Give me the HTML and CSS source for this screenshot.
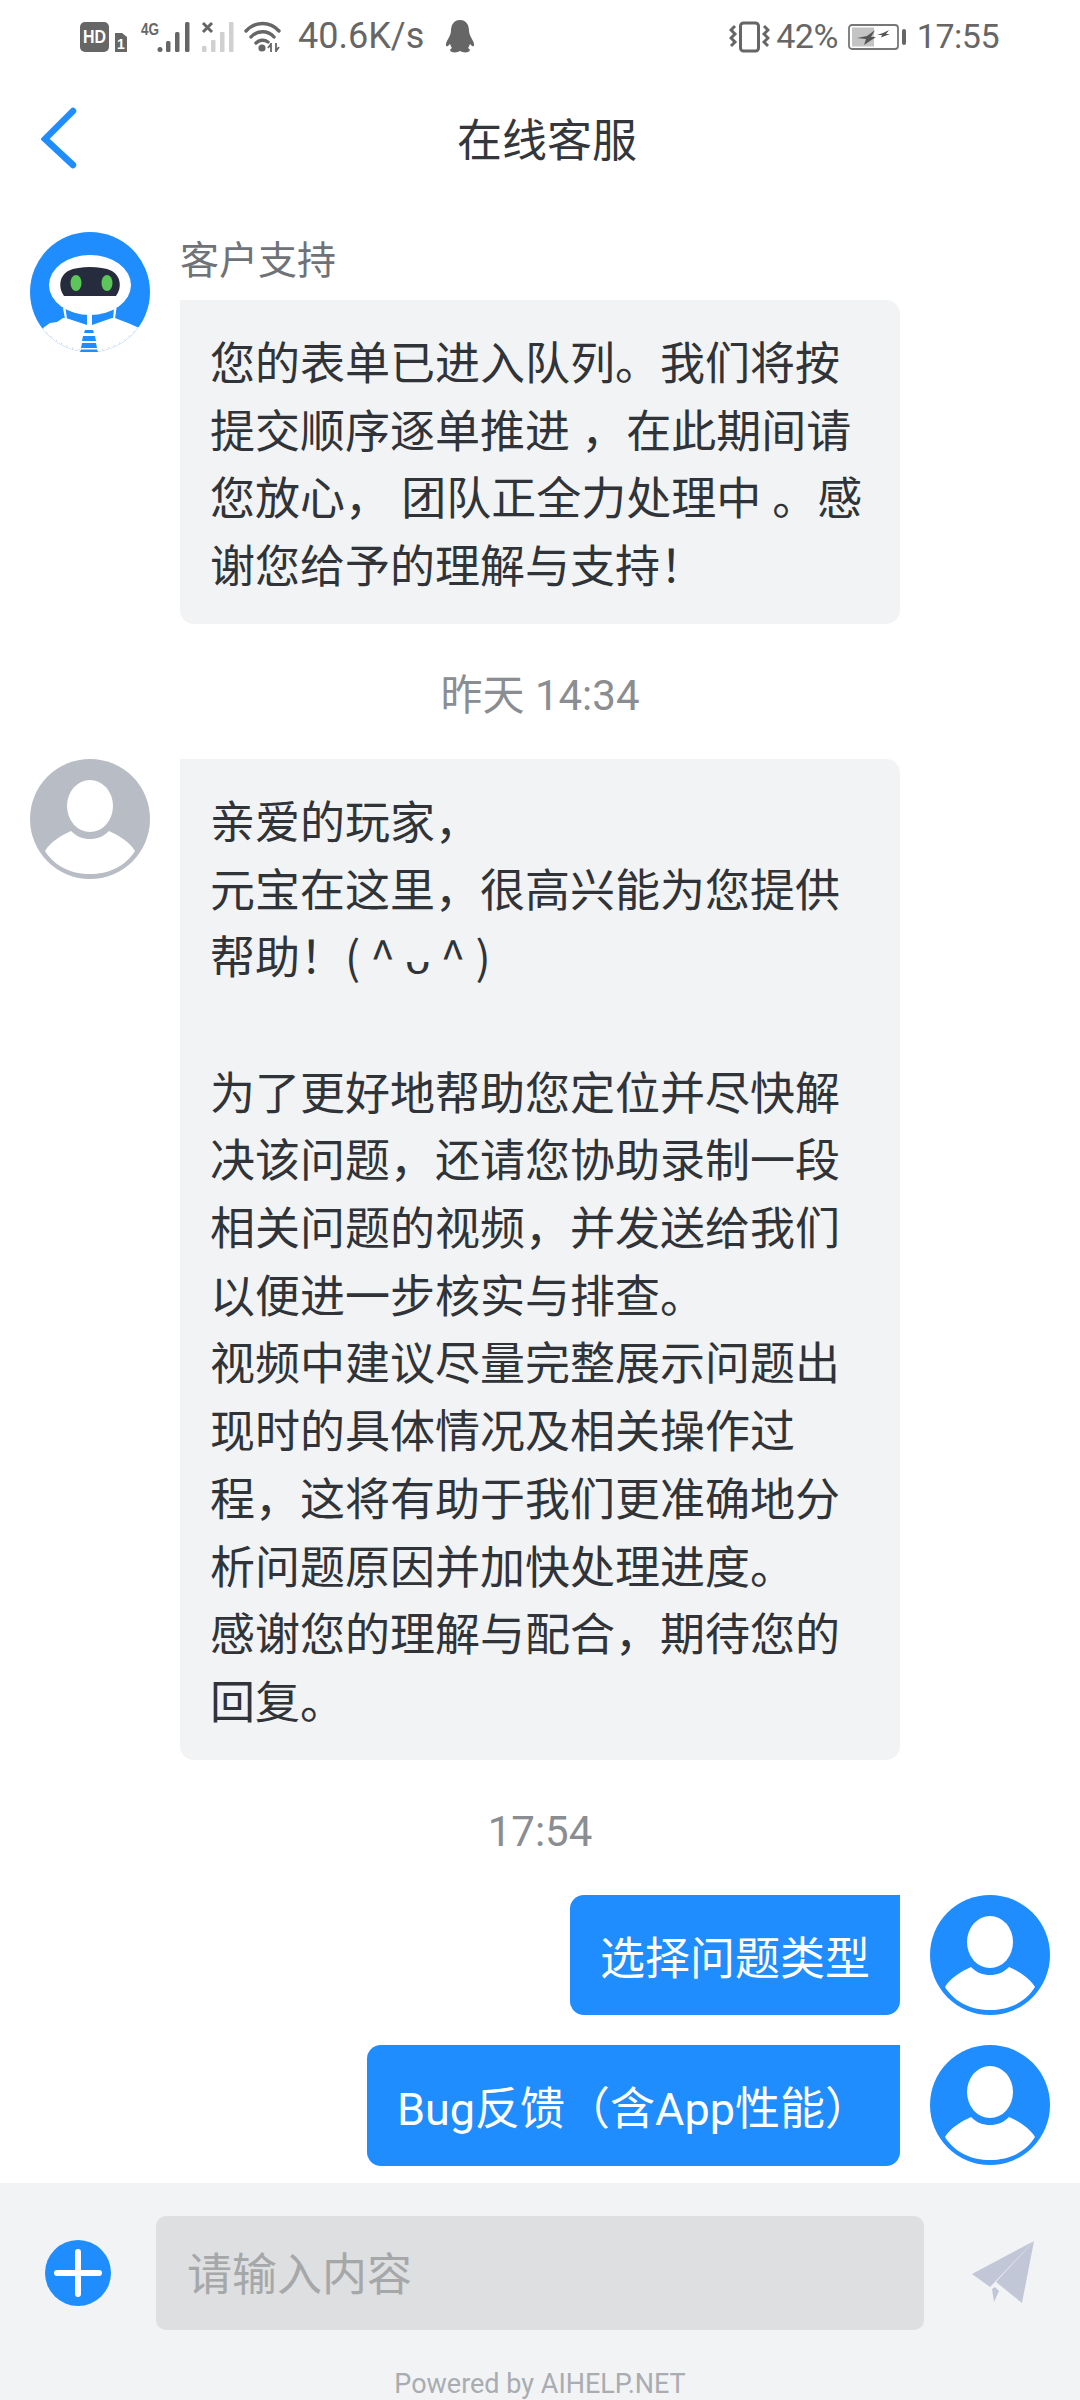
FILE: index.html
```html
<!DOCTYPE html>
<html lang="en">
<head>
  <meta charset="UTF-8">
  <title>在线客服</title>
  <link rel="stylesheet" href="styles.css">
</head>
<body>

  <div class="status-bar">
    <div class="status-group">
      <svg class="icon-hd" width="47" height="30" viewBox="0 0 47 30">
        <rect x="0" y="0" width="29" height="30" rx="5" fill="#666"/>
        <text x="14.5" y="21" class="hd-text" textLength="23" lengthAdjust="spacingAndGlyphs">HD</text>
        <path d="M35 11h7l5 4v15h-12z" fill="#666"/>
        <text x="41" y="27" class="sim-text">1</text>
      </svg>
      <svg class="icon-signal" width="50" height="32" viewBox="0 0 50 32">
        <text x="1" y="14" class="net-text" textLength="18" lengthAdjust="spacingAndGlyphs">4G</text>
        <circle cx="20" cy="28.5" r="2.5" fill="#666"/>
        <rect x="26" y="20" width="4.5" height="11" rx="1.5" fill="#666"/>
        <rect x="35" y="11" width="4.5" height="20" rx="1.5" fill="#666"/>
        <rect x="45" y="1" width="4.5" height="30" rx="1.5" fill="#666"/>
      </svg>
      <svg class="icon-signal-off" width="33" height="32" viewBox="0 0 33 32">
        <path d="M2 2l9 9M11 2l-9 9" stroke="#666" stroke-width="3" fill="none"/>
        <rect x="1" y="25" width="4.5" height="6" rx="1" fill="#d0d0d0"/>
        <rect x="10" y="19" width="4.5" height="12" rx="1" fill="#d0d0d0"/>
        <rect x="19" y="11" width="4.5" height="20" rx="1" fill="#d0d0d0"/>
        <rect x="28" y="1" width="4.5" height="30" rx="1" fill="#d0d0d0"/>
      </svg>
      <svg class="icon-wifi" width="37" height="32" viewBox="0 0 37 32">
        <path d="M2 10C11 0 26 0 35 10M7 16C13 9 24 9 30 16M12 22C15 19 20 18 24 21" stroke="#666" stroke-width="3.4" fill="none" stroke-linecap="round"/>
        <circle cx="18" cy="27" r="3.6" fill="#666"/>
        <path d="M27 22v9M32 22v9M24 27l3-4M35 26l-3 4" stroke="#666" stroke-width="1.8" fill="none"/>
      </svg>
      <span class="status-text speed">40.6K/s</span>
      <svg class="icon-qq" width="30" height="33" viewBox="0 0 30 33">
        <path d="M15 0C8 0 6 6 6 11C6 14 4 17 2 21C0 25 1 27 3 26L5 24C6 26 6 27 7 28C5 29 4 31 7 32C10 33 13 32 15 31C17 32 20 33 23 32C26 31 25 29 23 28C24 27 24 26 25 24L27 26C29 27 30 25 28 21C26 17 24 14 24 11C24 6 22 0 15 0Z" fill="#666"/>
      </svg>
    </div>
    <div class="status-group">
      <svg class="icon-vibrate" width="41" height="32" viewBox="0 0 41 32">
        <rect x="11.5" y="2" width="18" height="28" rx="3" fill="none" stroke="#666" stroke-width="3"/>
        <path d="M6 5L2 9L6 13L2 17L6 21L2 25" fill="none" stroke="#666" stroke-width="3"/>
        <path d="M35 5L39 9L35 13L39 17L35 21L39 25" fill="none" stroke="#666" stroke-width="3"/>
      </svg>
      <span class="status-text small">42%</span>
      <svg class="icon-battery" width="58" height="26" viewBox="0 0 58 26">
        <rect x="1" y="1" width="49" height="24" rx="3" fill="none" stroke="#777" stroke-width="1.8"/>
        <rect x="4" y="3.5" width="22" height="19" fill="#c4c4c4"/>
        <path d="M9 14L19 12L27 6L23 13L28 13L16 21L18 15Z" fill="#555"/>
        <path d="M29 11L35 9L41 6L38 10L42 10L33 13.5L34 11Z" fill="#555"/>
        <rect x="54" y="5" width="4" height="16" rx="2" fill="#666"/>
      </svg>
      <span class="status-text small">17:55</span>
    </div>
  </div>

  <div class="nav">
    <svg class="back" width="36" height="62" viewBox="0 0 36 62">
      <path d="M32 4L4 32L32 58" fill="none" stroke="#1f8dfd" stroke-width="6.5" stroke-linecap="round" stroke-linejoin="miter"/>
    </svg>
    <div class="nav-title">在线客服</div>
  </div>

  <div class="chat">

    <div class="row">
      <svg class="avatar" viewBox="0 0 120 120">
        <defs>
          <clipPath id="roundClip"><circle cx="60" cy="60" r="60"/></clipPath>
        </defs>
        <g clip-path="url(#roundClip)">
          <rect width="120" height="120" fill="#1f8dfd"/>
          <path d="M0 120V100L13 96L20 91L27 90L33 86L36 86L57 93H62L82 86L85 86L90 88L98 91L107 95L120 100V120Z" fill="#fff"/>
          <path d="M57 78H62V94H57ZM33 76L35.500 76L37 87H35ZM84 76L86.500 76L85 87H83Z" fill="#fff"/>
        </g>
        <path d="M13 96A60 60 0 0 0 107 96" fill="none" stroke="#bbb" stroke-width="1" stroke-dasharray="1 5"/>
        <ellipse cx="60" cy="53" rx="41" ry="30" fill="#fff"/>
        <path d="M34 64C28 56 29 44 38 39C44 36 52 35 60 35C68 35 76 36 82 39C91 44 92 56 86 64Z" fill="#262c3d"/>
        <ellipse cx="46" cy="51" rx="5.5" ry="8" fill="#5dc65a"/>
        <ellipse cx="77" cy="51" rx="5.5" ry="8" fill="#5dc65a"/>
        <path d="M55 98H63L64 101H54ZM53 104H65L66 109H52ZM52 111H66L67 116H51ZM51 117.500H67L68 120H50Z" fill="#1f8dfd"/>
      </svg>
      <div class="msg-col">
        <div class="sender">客户支持</div>
        <div class="bubble">您的表单已进入队列。我们将按<br>提交顺序逐单推进 ，在此期间请<br>您放心， 团队正全力处理中 。感<br>谢您给予的理解与支持！</div>
      </div>
    </div>

    <div class="time">昨天 14:34</div>

    <div class="row">
      <svg class="avatar" viewBox="0 0 120 120">
        <circle cx="60" cy="60" r="60" fill="#b8bcc4"/>
        <ellipse cx="60" cy="47" rx="23" ry="26" fill="#fff"/>
        <path d="M15 92C20 83 32 76 41 72C47 78 53 80 60 80C67 80 73 78 79 72C88 76 100 83 105 92C95 108 78 115 60 115C42 115 25 108 15 92Z" fill="#fff"/>
      </svg>
      <div class="msg-col">
        <div class="bubble">亲爱的玩家，<br>元宝在这里，很高兴能为您提供<br>帮助！<span class="kaomoji">( ^ ᴗ ^ )</span><br><br>为了更好地帮助您定位并尽快解<br>决该问题，还请您协助录制一段<br>相关问题的视频，并发送给我们<br>以便进一步核实与排查。<br>视频中建议尽量完整展示问题出<br>现时的具体情况及相关操作过<br>程，这将有助于我们更准确地分<br>析问题原因并加快处理进度。<br>感谢您的理解与配合，期待您的<br>回复。</div>
      </div>
    </div>

    <div class="time">17:54</div>

    <div class="row mine">
      <div class="bubble blue">选择问题类型</div>
      <svg class="avatar" viewBox="0 0 120 120">
        <circle cx="60" cy="60" r="60" fill="#1f8dfd"/>
        <ellipse cx="60" cy="47" rx="23" ry="26" fill="#fff"/>
        <path d="M15 92C20 83 32 76 41 72C47 78 53 80 60 80C67 80 73 78 79 72C88 76 100 83 105 92C95 108 78 115 60 115C42 115 25 108 15 92Z" fill="#fff"/>
      </svg>
    </div>

    <div class="row mine">
      <div class="bubble blue">Bug反馈（含App性能）</div>
      <svg class="avatar" viewBox="0 0 120 120">
        <circle cx="60" cy="60" r="60" fill="#1f8dfd"/>
        <ellipse cx="60" cy="47" rx="23" ry="26" fill="#fff"/>
        <path d="M15 92C20 83 32 76 41 72C47 78 53 80 60 80C67 80 73 78 79 72C88 76 100 83 105 92C95 108 78 115 60 115C42 115 25 108 15 92Z" fill="#fff"/>
      </svg>
    </div>

  </div>

  <div class="footer">
    <div class="input-row">
      <svg class="plus" width="66" height="66" viewBox="0 0 66 66">
        <circle cx="33" cy="33" r="33" fill="#1f8dfd"/>
        <path d="M33 12V54M12 33H54" stroke="#fff" stroke-width="6" stroke-linecap="round"/>
      </svg>
      <div class="input">请输入内容</div>
      <svg class="send" width="68" height="68" viewBox="0 0 68 68">
        <path d="M65 2L3 35L21 48Z" fill="#c1c7d6"/>
        <path d="M65 2L27 43L53 64Z" fill="#c1c7d6"/>
        <path d="M23 50L25 63L30 52L26 48Z" fill="#c1c7d6"/>
      </svg>
    </div>
    <div class="powered">Powered by AIHELP.NET</div>
  </div>

</body>
</html>
```

FILE: styles.css
```css
* {
  box-sizing: border-box;
}

body {
  margin: 0;
  width: 1080px;
  height: 2400px;
  overflow: hidden;
  display: flex;
  flex-direction: column;
  background-color: #fff;
  font-family: Roboto, 'Noto Sans CJK SC', sans-serif;
}

svg {
  display: block;
  flex-shrink: 0;
}

/* status bar */
.status-bar {
  flex-shrink: 0;
  height: 76px;
  padding: 20px 81px 0 80px;
  display: flex;
  justify-content: space-between;
  align-items: flex-start;
}

.status-group {
  display: flex;
  align-items: center;
  height: 33px;
}

.status-text {
  font-size: 36px;
  line-height: 33px;
  color: #666;
}

.status-text.small {
  font-size: 34px;
  letter-spacing: -0.5px;
}

.hd-text {
  font-family: 'Liberation Sans', sans-serif;
  font-size: 19px;
  font-weight: bold;
  fill: #fff;
  text-anchor: middle;
}

.sim-text {
  font-family: 'Liberation Sans', sans-serif;
  font-size: 14px;
  font-weight: bold;
  fill: #fff;
  text-anchor: middle;
}

.net-text {
  font-family: 'Liberation Sans', sans-serif;
  font-size: 17px;
  font-weight: bold;
  fill: #666;
}

.icon-hd {
  margin-right: 13px;
}

.icon-signal {
  margin-right: 11px;
}

.icon-signal-off {
  margin-right: 10px;
}

.speed {
  margin-left: 17px;
  margin-right: 21px;
}

.icon-vibrate {
  margin-right: 6px;
}

.icon-battery {
  margin: 0 11px 0 10px;
}

/* nav */
.nav {
  flex-shrink: 0;
  height: 128px;
  position: relative;
  display: flex;
  align-items: center;
  justify-content: center;
  padding-bottom: 6px;
}

.back {
  position: absolute;
  left: 41px;
  top: 31px;
}

.nav-title {
  font-size: 45px;
  color: #33373b;
  margin-left: 14px;
}

/* messages */
.chat {
  flex: 1;
  min-height: 0;
  padding: 28px 30px 0;
}

.row {
  display: flex;
  align-items: flex-start;
  gap: 30px;
}

.mine {
  justify-content: flex-end;
  margin-bottom: 30px;
}

.avatar {
  width: 120px;
  height: 120px;
}

.msg-col {
  width: 720px;
}

.sender {
  font-size: 39px;
  line-height: 58px;
  color: #6f7276;
  margin-bottom: 10px;
}

.bubble {
  background-color: #f1f3f5;
  border-radius: 0 14px 14px 14px;
  padding: 31px 30px 22px;
  font-size: 45px;
  line-height: 67.7px;
  color: #303438;
}

.bubble.blue {
  background-color: #1f8dfd;
  color: #fff;
  border-radius: 14px 0 14px 14px;
}

.kaomoji {
  font-family: 'Noto Sans CJK SC', sans-serif;
  line-height: 1;
}

.time {
  height: 56px;
  margin: 44px 0 35px;
  text-align: center;
  font-size: 42px;
  line-height: 56px;
  color: #8a8d91;
}

/* footer */
.footer {
  flex-shrink: 0;
  height: 217px;
  background-color: #f1f3f5;
  padding-top: 33px;
}

.input-row {
  display: flex;
  align-items: center;
  padding-left: 45px;
}

.input {
  width: 768px;
  height: 114px;
  margin: 0 45px 0 45px;
  padding-left: 31px;
  background-color: #dddfe1;
  border-radius: 10px;
  font-size: 45px;
  line-height: 119px;
  color: #a5a7a9;
}

.powered {
  margin-top: 37px;
  text-align: center;
  font-size: 27px;
  line-height: 34px;
  color: #a9acb0;
}
```
